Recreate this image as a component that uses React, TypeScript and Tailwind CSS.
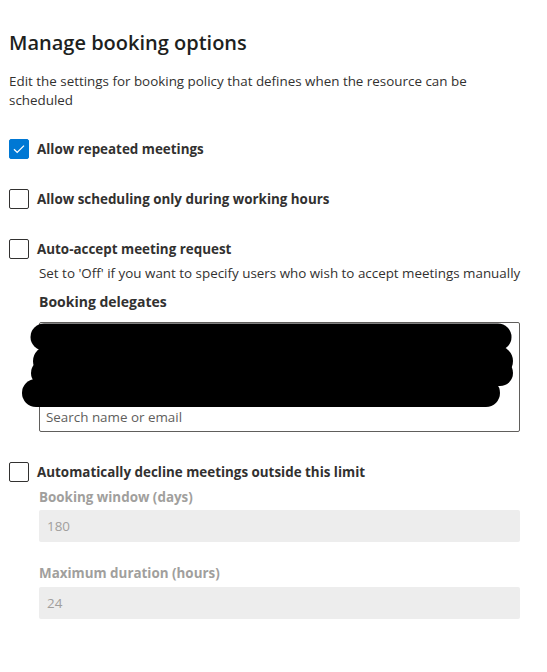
import { useState } from 'react';

type CheckProps = {
  checked: boolean;
  onChange: () => void;
  label: string;
};

function CheckRow({ checked, onChange, label }: CheckProps) {
  return (
    <label className="flex h-[20px] items-center gap-[8px] cursor-pointer select-none">
      <span
        onClick={onChange}
        className={`flex h-[20px] w-[20px] items-center justify-center rounded-[2px] border ${
          checked ? 'border-[#0078d4] bg-[#0078d4]' : 'border-[#323130] bg-white'
        }`}
      >
        {checked && (
          <svg width="12" height="10" viewBox="0 0 12 10" fill="none">
            <path d="M1 5.2L4.2 8.4L11 1.6" stroke="white" strokeWidth="1.3" />
          </svg>
        )}
      </span>
      <span className="text-[13.4px] font-bold text-[#323130]">{label}</span>
    </label>
  );
}

export default function App() {
  const [repeated, setRepeated] = useState(true);
  const [workingHours, setWorkingHours] = useState(false);
  const [autoAccept, setAutoAccept] = useState(false);
  const [decline, setDecline] = useState(false);

  return (
    <div className="min-h-[672px] w-[547px] bg-white pl-[9px] pr-[27px] pt-[28px] font-['Open_Sans',sans-serif] text-[#323130]">
      <h1 className="text-[20px] font-semibold leading-[30px] text-[#201f1e]">Manage booking options</h1>
      <p className="mt-[14px] text-[13.4px] leading-[19px]">
        Edit the settings for booking policy that defines when the resource can be scheduled
      </p>

      <div className="mt-[29px] flex flex-col">
        <CheckRow checked={repeated} onChange={() => setRepeated(!repeated)} label="Allow repeated meetings" />
        <div className="mt-[30px]">
          <CheckRow checked={workingHours} onChange={() => setWorkingHours(!workingHours)} label="Allow scheduling only during working hours" />
        </div>
        <div className="mt-[30px]">
          <CheckRow checked={autoAccept} onChange={() => setAutoAccept(!autoAccept)} label="Auto-accept meeting request" />
        </div>

        <div className="pl-[30px]">
          <p className="mt-[4px] text-[13.4px] leading-[20px] whitespace-nowrap">
            Set to 'Off' if you want to specify users who wish to accept meetings manually
          </p>
          <p className="mt-[9px] text-[14px] font-bold leading-[20px]">Booking delegates</p>
          <div className="relative mt-[10px] flex h-[110px] w-[481px] flex-col justify-end rounded-[2px] border border-[#605e5c]">
            <svg className="absolute left-[-18px] top-[0px]" width="496" height="86" viewBox="0 0 496 86" fill="none">
              <line x1="22" y1="14" x2="476" y2="14" stroke="black" strokeWidth="27" strokeLinecap="round" />
              <line x1="26" y1="38" x2="476" y2="38" stroke="black" strokeWidth="30" strokeLinecap="round" />
              <line x1="22" y1="50" x2="478" y2="50" stroke="black" strokeWidth="26" strokeLinecap="round" />
              <line x1="14" y1="70" x2="464" y2="70" stroke="black" strokeWidth="28" strokeLinecap="round" />
            </svg>
            <input
              placeholder="Search name or email"
              className="h-[28px] w-full bg-transparent px-[6px] text-[13.4px] text-[#323130] outline-none placeholder:text-[#605e5c]"
            />
          </div>
        </div>

        <div className="mt-[30px]">
          <CheckRow checked={decline} onChange={() => setDecline(!decline)} label="Automatically decline meetings outside this limit" />
        </div>

        <div className="pl-[30px]">
          <p className="mt-[5px] text-[13.4px] font-bold leading-[20px] text-[#a19f9d]">Booking window (days)</p>
          <div className="mt-[3px] flex h-[32px] w-[481px] items-center rounded-[2px] bg-[#ededed] px-[8px] text-[13.4px] text-[#a19f9d]">
            180
          </div>
          <p className="mt-[21px] text-[13.4px] font-bold leading-[20px] text-[#a19f9d]">Maximum duration (hours)</p>
          <div className="mt-[4px] flex h-[32px] w-[481px] items-center rounded-[2px] bg-[#ededed] px-[8px] text-[13.4px] text-[#a19f9d]">
            24
          </div>
        </div>
      </div>
    </div>
  );
}
